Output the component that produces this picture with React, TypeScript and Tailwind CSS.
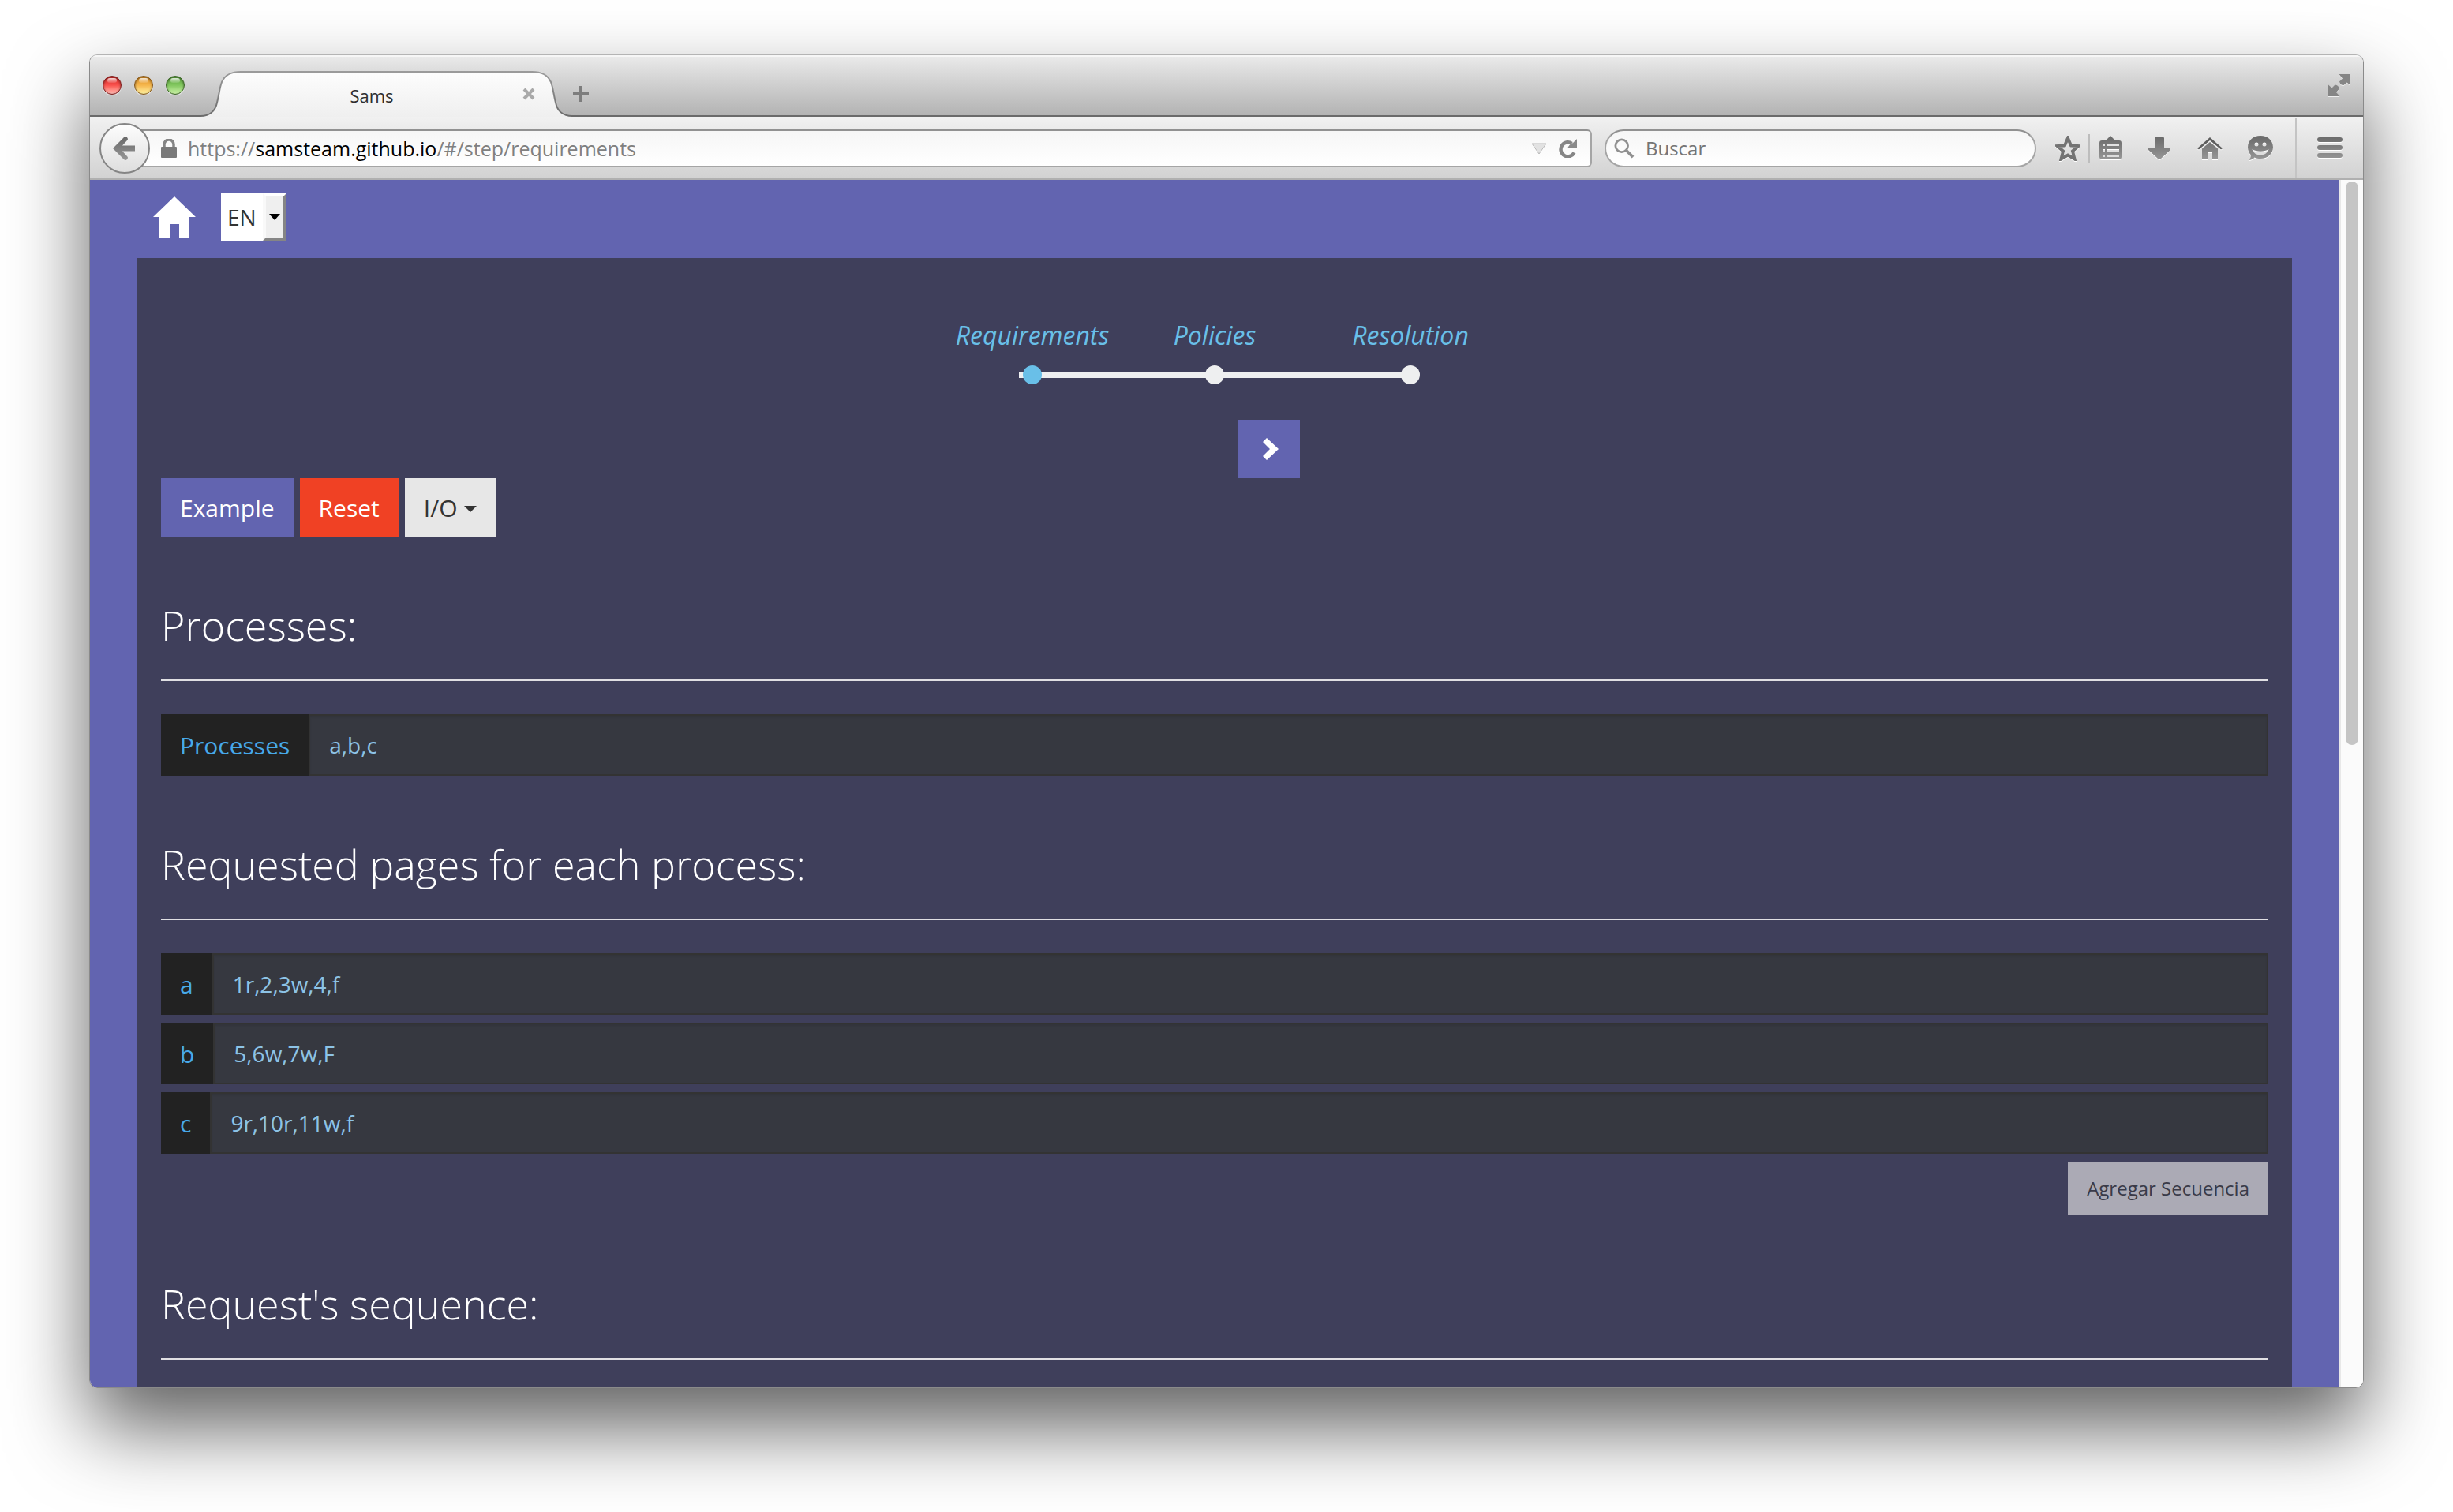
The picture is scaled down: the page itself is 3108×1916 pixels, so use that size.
import React from "react";

function TrafficLight({ label, tone }: { label: string; tone: string }) {
  return (
    <button
      aria-label={label}
      className={`relative size-6 overflow-hidden rounded-full border shadow-[0_1px_1px_rgba(255,255,255,0.7),inset_0_1px_3px_rgba(0,0,0,0.5)] ${tone}`}
    >
      <span className="absolute inset-x-[5px] top-[2px] h-[6px] rounded-full bg-linear-to-b from-white/80 to-white/10" />
    </button>
  );
}

function TitleBar() {
  return (
    <div className="flex h-[78px] items-end justify-between border-b-2 border-[#6a6a6a] bg-linear-to-b from-[#ebebeb] to-[#b3b3b3] shadow-[inset_0_2px_0_#f6f6f6]">
      <div className="flex items-end">
        <div className="flex h-[76px] w-[140px] items-center gap-4 pl-4">
          <TrafficLight label="Close" tone="border-[#7d1f1e] bg-linear-to-b from-[#d42a28] via-[#f9504c] to-[#ffb9b4]" />
          <TrafficLight label="Minimize" tone="border-[#85561a] bg-linear-to-b from-[#dd8f22] via-[#f5b64c] to-[#fff3a0]" />
          <TrafficLight label="Zoom" tone="border-[#3c6628] bg-linear-to-b from-[#5ba33d] via-[#82c75f] to-[#cdf5a8]" />
        </div>
        <div className="relative -mb-[2px] h-[58px] w-[471px]">
          <svg viewBox="0 0 471 58" className="absolute inset-0 h-full w-full" aria-hidden="true">
            <defs>
              <linearGradient id="tabFill" x1="0" y1="0" x2="0" y2="1">
                <stop offset="0" stopColor="#fdfdfd" />
                <stop offset="1" stopColor="#efefef" />
              </linearGradient>
              <linearGradient id="tabLine" gradientUnits="userSpaceOnUse" x1="0" y1="0" x2="0" y2="58">
                <stop offset="0" stopColor="#9b9b9b" />
                <stop offset="1" stopColor="#6a6a6a" />
              </linearGradient>
            </defs>
            <path
              d="M0 58V57C12 57 19 50 21 40C24 28 24 22 27 14C31 5 38 1 51 1H420C433 1 440 5 444 14C447 22 447 28 450 40C452 50 459 57 471 57V58Z"
              fill="url(#tabFill)"
            />
            <path
              d="M0 57C12 57 19 50 21 40C24 28 24 22 27 14C31 5 38 1 51 1H420C433 1 440 5 444 14C447 22 447 28 450 40C452 50 459 57 471 57"
              fill="none"
              stroke="url(#tabLine)"
              strokeWidth="2"
            />
          </svg>
          <div className="relative flex h-full items-center pr-[47px] pl-[26px] pt-1">
            <span className="flex-1 text-center text-[22px] leading-8 text-[#2e2e2e]">Sams</span>
            <button aria-label="Close tab" className="mb-1">
              <svg viewBox="0 0 16 16" className="size-4" stroke="#a9a9a9" strokeWidth="4" fill="none">
                <path d="M2 2L14 14M14 2L2 14" />
              </svg>
            </button>
          </div>
        </div>
        <button aria-label="New tab" className="mb-4">
          <svg viewBox="0 0 22 22" className="size-[22px]" stroke="#7d7d7d" strokeWidth="4" fill="none">
            <path d="M11 1V21M1 11H21" />
          </svg>
        </button>
      </div>
      <button aria-label="Full screen" className="mr-4 mb-6">
        <svg viewBox="0 0 28 28" className="size-7 drop-shadow-[0_1px_0_#eeeeee]" fill="#858585">
          <path d="M13.500 0H28V14L23.500 10.500L19.500 14Q15 14 14 9.500L18 5.500Z" />
          <path d="M0 13.500L4.500 17.500L8.500 13.500Q13 14 14 18.500L10 23L14.500 28H0Z" />
        </svg>
      </button>
    </div>
  );
}

function IconDefs() {
  return (
    <svg className="absolute size-0" aria-hidden="true">
      <defs>
        <linearGradient id="tool" gradientUnits="userSpaceOnUse" x1="0" y1="0" x2="0" y2="32">
          <stop offset="0" stopColor="#686868" />
          <stop offset="1" stopColor="#9a9a9a" />
        </linearGradient>
      </defs>
    </svg>
  );
}

function ToolIcon({ label, children }: { label: string; children: React.ReactNode }) {
  return (
    <button aria-label={label}>
      <svg viewBox="0 0 32 32" className="size-8 drop-shadow-[0_1px_0_#ffffff]" fill="url(#tool)">
        {children}
      </svg>
    </button>
  );
}

function Toolbar() {
  return (
    <div className="flex h-20 items-center border-b-2 border-[#b0b0b0] bg-linear-to-b from-[#f1f1f1] to-[#d2d2d2] pt-[2px] pl-3">
      <button
        aria-label="Back"
        className="z-10 flex size-16 shrink-0 items-center justify-center rounded-full border-2 border-[#858585] bg-linear-to-b from-[#fdfdfd] to-[#dedede] pr-[3px]"
      >
        <svg viewBox="0 0 28 30" className="h-[30px] w-7" fill="url(#tool)">
          <path d="M0 15L14 1Q16 -1 18 1L19 3Q19 4 18 5L12 11.500H28V18.500H12L18 25Q19 26 19 27L18 29Q16 31 14 29Z" />
        </svg>
      </button>
      <div className="-ml-4 flex h-12 flex-1 items-center rounded-r-md border-2 border-[#a5a5a5] border-t-[#919191] bg-linear-to-b from-[#f6f6f6] to-white pr-4 pl-7">
        <svg viewBox="0 0 20 24" className="h-6 w-5" aria-hidden="true">
          <path d="M4 11V7A6 6 0 0 1 16 7V11" fill="none" stroke="#858585" strokeWidth="3.500" />
          <rect y="10" width="20" height="14" rx="1" fill="#7a7a7a" />
        </svg>
        <div
          role="textbox"
          tabIndex={0}
          aria-label="Address"
          className="ml-[14px] flex-1 text-[25px] leading-8 text-[#808080]"
        >
          https://<span className="text-black">samsteam.github.io</span>/#/step/requirements
        </div>
        <button aria-label="History">
          <svg viewBox="0 0 20 15" className="h-[15px] w-5">
            <path d="M1 1H19L10 14Z" fill="#e2e2e2" stroke="#b9b9b9" />
          </svg>
        </button>
        <button aria-label="Reload" className="ml-[15px]">
          <svg viewBox="0 0 24 24" className="size-6">
            <path d="M16.500 5.800A9 9 0 1 0 19.500 17.500" fill="none" stroke="#868686" strokeWidth="4.500" />
            <path d="M23 0V12H11Q13 7 18 5Z" fill="#8a8a8a" />
          </svg>
        </button>
      </div>
      <div className="ml-4 flex h-12 w-[547px] items-center rounded-full border-2 border-[#a5a5a5] border-t-[#919191] bg-linear-to-b from-[#f6f6f6] to-white pl-[10px]">
        <svg viewBox="0 0 28 28" className="size-7" fill="none" stroke="#909090" aria-hidden="true">
          <circle cx="10.500" cy="10.500" r="8.500" strokeWidth="3" />
          <path d="M16.500 16.500L26 26" strokeWidth="4" />
        </svg>
        <input
          aria-label="Search"
          placeholder="Buscar"
          className="ml-[14px] w-full bg-transparent text-2xl outline-none placeholder:text-[#757575]"
        />
      </div>
      <div className="flex items-center pl-6">
        <ToolIcon label="Bookmark this page">
          <path
            d="M16 3L20 12.500L29.500 13L22 19.500L24.500 29.500L16 24.500L7.500 29.500L10 19.500L2.500 13L12 12.500Z"
            fill="none"
            stroke="#737373"
            strokeWidth="4"
          />
        </ToolIcon>
        <span className="mx-[10px] h-9 w-[2px] bg-[#bdbdbd]" />
        <ToolIcon label="Bookmarks">
          <path
            fillRule="evenodd"
            d="M5 6H10L16 0L22 6H27Q30 6 30 9V27Q30 30 27 30H5Q2 30 2 27V9Q2 6 5 6ZM12 10V13H27V10ZM12 17V20H27V17ZM12 24V27H27V24ZM6 10V13H9V10ZM6 17V20H9V17ZM6 24V27H9V24Z"
          />
        </ToolIcon>
        <span className="w-[30px]" />
        <ToolIcon label="Downloads">
          <path d="M11 2H21Q22 2 22 3V16H30V18L18 29Q16 31 14 29L2 18V16H10V3Q10 2 11 2Z" />
        </ToolIcon>
        <span className="w-8" />
        <ToolIcon label="Home page">
          <path d="M16 2L32 16L30 17.500L16 6L2 17.500L0 16Z" fill="#5e5e5e" />
          <path d="M16 8L26 16.500V30H19V21H13V30H6V16.500Z" />
        </ToolIcon>
        <span className="w-8" />
        <ToolIcon label="Chat">
          <path
            fillRule="evenodd"
            d="M16 0C25 0 32 6 32 14.500C32 23 25 29 16 29C13 29 10.500 28.500 8.500 27.500C7 29.500 4 31 1 31C3 29 4 27 4 24.500C1.500 22 0 18.500 0 14.500C0 6 7 0 16 0ZM11 8.500A2.500 2.500 0 1 0 11 13.500A2.500 2.500 0 1 0 11 8.500ZM21 8.500A2.500 2.500 0 1 0 21 13.500A2.500 2.500 0 1 0 21 8.500ZM5.500 17C8 27 24 27 26.500 17C21 20.500 11 20.500 5.500 17Z"
          />
        </ToolIcon>
        <span className="mr-[26px] ml-7 h-[76px] w-[2px] bg-[#c4c4c4]" />
        <ToolIcon label="Menu">
          <rect y="2" width="32" height="6" rx="3" />
          <rect y="12" width="32" height="6" rx="3" />
          <rect y="22" width="32" height="6" rx="3" />
        </ToolIcon>
        <span className="w-[26px]" />
      </div>
    </div>
  );
}

function SiteHeader() {
  return (
    <header className="flex h-[99px] items-center gap-8 px-[80px] pb-[6px]">
      <a href="#/" aria-label="Home">
        <svg viewBox="0 0 54 52" className="h-[52px] w-[54px]" fill="#ffffff">
          <path d="M27 0L54 26H46V52H33V35H21V52H8V26H0Z" />
        </svg>
      </a>
      <div className="relative h-[60px] w-[83px]">
        <select
          aria-label="Language"
          className="h-full w-full appearance-none bg-white pl-2 text-[28px] text-[#333333] outline-none"
          defaultValue="EN"
        >
          <option>EN</option>
          <option>ES</option>
        </select>
        <span className="pointer-events-none absolute inset-y-0 right-0 flex w-[30px] items-center justify-center border-4 border-t-white border-r-[#858585] border-b-[#858585] border-l-[#f9f9f9] bg-[#efefef]">
          <svg viewBox="0 0 14 8" className="h-2 w-[14px]" aria-hidden="true">
            <path d="M0 0H14L7 8Z" fill="#000000" />
          </svg>
        </span>
      </div>
    </header>
  );
}

const steps = [
  { name: "Requirements", dot: "bg-[#69bfe8]" },
  { name: "Policies", dot: "bg-[#eeeff0]" },
  { name: "Resolution", dot: "bg-[#eeeff0]" },
];

function Steps() {
  return (
    <nav aria-label="Steps" className="flex justify-center pl-[34px]">
      <ol className="relative grid grid-cols-[232px_230px_266px]">
        <span className="absolute right-[130px] bottom-2 left-[99px] h-2 bg-[#eeeff0]" />
        {steps.map((s) => (
          <li key={s.name} className="relative flex flex-col items-center gap-4">
            <a href="#/step" className="text-[32px] leading-[44px] text-[#69bfe8] italic">
              {s.name}
            </a>
            <span className={`size-6 rounded-full ${s.dot}`} />
          </li>
        ))}
      </ol>
    </nav>
  );
}

function Heading({ children }: { children: React.ReactNode }) {
  return (
    <h2 className="border-b-2 border-[#e0dfe3] pb-[33px] text-[52px] leading-[72px] font-light text-white">
      {children}
    </h2>
  );
}

function Field({ id, label, value }: { id: string; label: string; value: string }) {
  return (
    <div className="flex h-[78px]">
      <label htmlFor={id} className="flex items-center bg-[#222222] px-6 text-[30px] text-[#47a9ea]">
        {label}
      </label>
      <input
        id={id}
        defaultValue={value}
        className="min-w-0 flex-1 border-2 border-[#333333] bg-[#363840] px-6 text-[28px] text-[#8dc3e6] shadow-[inset_0_2px_2px_rgba(0,0,0,0.08)] outline-none"
      />
    </div>
  );
}

function RequirementsPage() {
  return (
    <main className="mx-[60px] bg-[#3f3f5b] px-[30px] pt-[76px] pb-[35px]">
      <Steps />
      <div className="mt-[45px] flex justify-center pl-[138px]">
        <button aria-label="Next" className="flex h-[74px] w-[78px] items-center justify-center bg-[#6264b0]">
          <svg viewBox="0 0 20 28" className="ml-1 h-7 w-5">
            <path d="M0 5L5 0L20 14L5 28L0 23L9 14Z" fill="#ffffff" />
          </svg>
        </button>
      </div>
      <div className="flex h-[74px] gap-2 text-[30px]">
        <button className="bg-[#6264b0] px-6 text-white">Example</button>
        <button className="bg-[#f04124] px-6 text-white">Reset</button>
        <button className="flex items-center gap-2 bg-[#e7e7e7] px-6 text-[#333333]">
          I/O
          <svg viewBox="0 0 16 8" className="mt-1 h-2 w-4" aria-hidden="true">
            <path d="M0 0H16L8 8Z" fill="#333333" />
          </svg>
        </button>
      </div>

      <section className="mt-[76px]">
        <Heading>Processes:</Heading>
        <div className="mt-[42px]">
          <Field id="processes" label="Processes" value="a,b,c" />
        </div>
      </section>

      <section className="mt-[76px]">
        <Heading>Requested pages for each process:</Heading>
        <div className="mt-[42px] flex flex-col gap-[10px]">
          <Field id="pages-a" label="a" value="1r,2,3w,4,f" />
          <Field id="pages-b" label="b" value="5,6w,7w,F" />
          <Field id="pages-c" label="c" value="9r,10r,11w,f" />
          <button className="h-[68px] self-end bg-[#abaab5] px-6 text-2xl text-[#3a3a48]">
            Agregar Secuencia
          </button>
        </div>
      </section>

      <section className="mt-[76px]">
        <Heading>Request's sequence:</Heading>
      </section>
    </main>
  );
}

export default function App() {
  return (
    <div className="bg-white px-[113px] pt-[69px] pb-[157px] font-['Open_Sans','Noto_Sans',sans-serif]">
      <IconDefs />
      <div className="overflow-hidden rounded-[10px] border border-[#8a8a8a] border-t-[#b4b4b4] shadow-[0_50px_100px_rgba(0,0,0,0.62)]">
        <TitleBar />
        <Toolbar />
        <div className="flex">
          <div className="min-w-0 flex-1 bg-[#6264b0]">
            <SiteHeader />
            <RequirementsPage />
          </div>
          <div className="w-[30px] border-l-2 border-[#e8e8e8] bg-[#fbfbfb] px-[6px] pt-[2px]">
            <div className="h-[714px] w-4 rounded-full bg-[#c5c5c5]" />
          </div>
        </div>
      </div>
    </div>
  );
}
